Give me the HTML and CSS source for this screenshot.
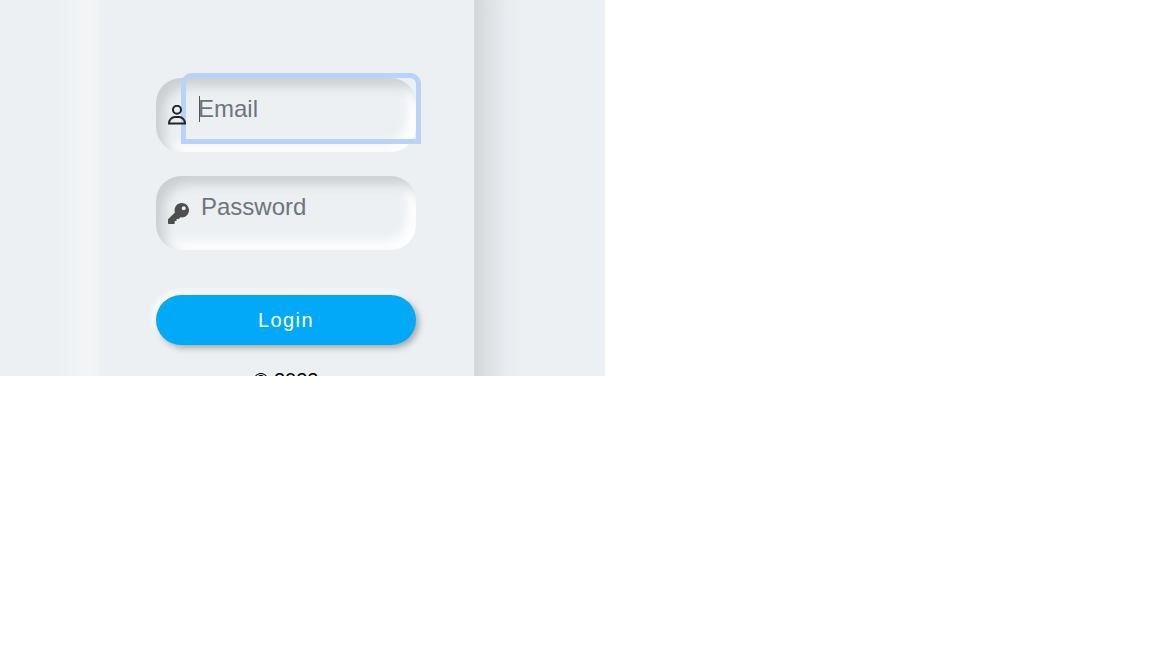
FILE: index.html
```html
<!DOCTYPE html>
<html lang="en">
<head>
    <meta charset="UTF-8">
    <meta name="viewport" content="width=device-width, initial-scale=1.0">
    <title>Login</title>
    <link rel="stylesheet" href="styles.css">
</head>
<body>
    <div class="page">
        <div class="card">
            <!-- Email -->
            <div class="field">
                <svg class="field-icon" viewBox="0 0 20 21" width="20" height="21" fill="none" stroke="#212529" stroke-width="2">
                    <circle cx="9" cy="4.800" r="4"/>
                    <path d="M1 18.600c0-3.800 2.800-6.600 6-6.600h4c3.200 0 6 2.800 6 6.600z"/>
                </svg>
                <input class="field-input focused" type="text" placeholder="Email">
                <span class="caret"></span>
            </div>

            <!-- Password -->
            <div class="field">
                <svg class="field-icon" viewBox="0 0 512 512" width="21" height="21" fill="#4f4f4f">
                    <path d="M512 176c0 97.200-78.800 176-176 176-11.200 0-22.200-1.100-32.800-3.100L262 392h-54v44h-44v52c0 13.300-10.700 24-24 24H24c-13.300 0-24-10.700-24-24v-78.100c0-6.400 2.500-12.500 7-17l161.800-161.800C163.100 213.800 160 195.300 160 176 160 78.800 238.800 0 336 0c97.500 0 176 78.500 176 176zM336 128c0 26.500 21.500 48 48 48s48-21.500 48-48-21.500-48-48-48-48 21.500-48 48z"/>
                </svg>
                <input class="field-input password" type="password" placeholder="Password">
            </div>

            <button class="login-button">Login</button>
            <p class="copyright">© 2022</p>
        </div>
    </div>
</body>
</html>
```

FILE: styles.css
```css
body {
    margin: 0;
    background-color: #fff;
    font-family: "Liberation Sans", Arial, sans-serif;
}

.page {
    width: 605px;
    height: 376px;
    overflow: hidden;
    background-color: #ecf0f3;
    padding-left: 99px;
    box-sizing: border-box;
}

.card {
    width: 375px;
    height: 500px;
    margin-top: -40px;
    padding: 118px 58px 0 57px;
    box-sizing: border-box;
    background-color: #ecf0f3;
    box-shadow: 13px 13px 32px #cbced1, -12px -12px 36px #fff;
}

.field {
    position: relative;
    height: 73.5px;
    margin-bottom: 24.5px;
    padding-left: 30px;
    box-sizing: border-box;
    border-radius: 25px;
    box-shadow: inset 8px 8px 12px #cbced1, inset -8px -8px 12px #fff;
}

.field-icon {
    position: absolute;
    left: 12px;
    top: 27px;
    z-index: 1;
}

.field-input {
    display: block;
    width: 230px;
    height: 61px;
    padding: 0 0 0 12px;
    box-sizing: border-box;
    border: none;
    outline: none;
    border-radius: 6px 6px 0 0;
    background: transparent;
    font-family: "Liberation Sans", Arial, sans-serif;
    font-size: 24px;
    color: #212529;
}

.field-input.password {
    padding-left: 15px;
}

.field-input::placeholder {
    color: #6c757d;
    opacity: 1;
}

.field-input.focused {
    outline: 5px solid #b8d3f7;
}

.caret {
    position: absolute;
    left: 43px;
    top: 18px;
    width: 1px;
    height: 26px;
    background-color: #555;
}

.login-button {
    display: block;
    width: 260px;
    height: 50px;
    margin-top: 45px;
    padding: 2px 0 0;
    border: none;
    border-radius: 25px;
    background-color: #02a9f7;
    box-shadow: 3px 3px 6px #a8a8a8, -3px -3px 6px #fff;
    color: #fff;
    font-family: "Liberation Sans", Arial, sans-serif;
    font-size: 20px;
    letter-spacing: 1.4px;
}

.copyright {
    margin: 24px 0 0;
    text-align: center;
    font-size: 20px;
    color: #000;
}
```
